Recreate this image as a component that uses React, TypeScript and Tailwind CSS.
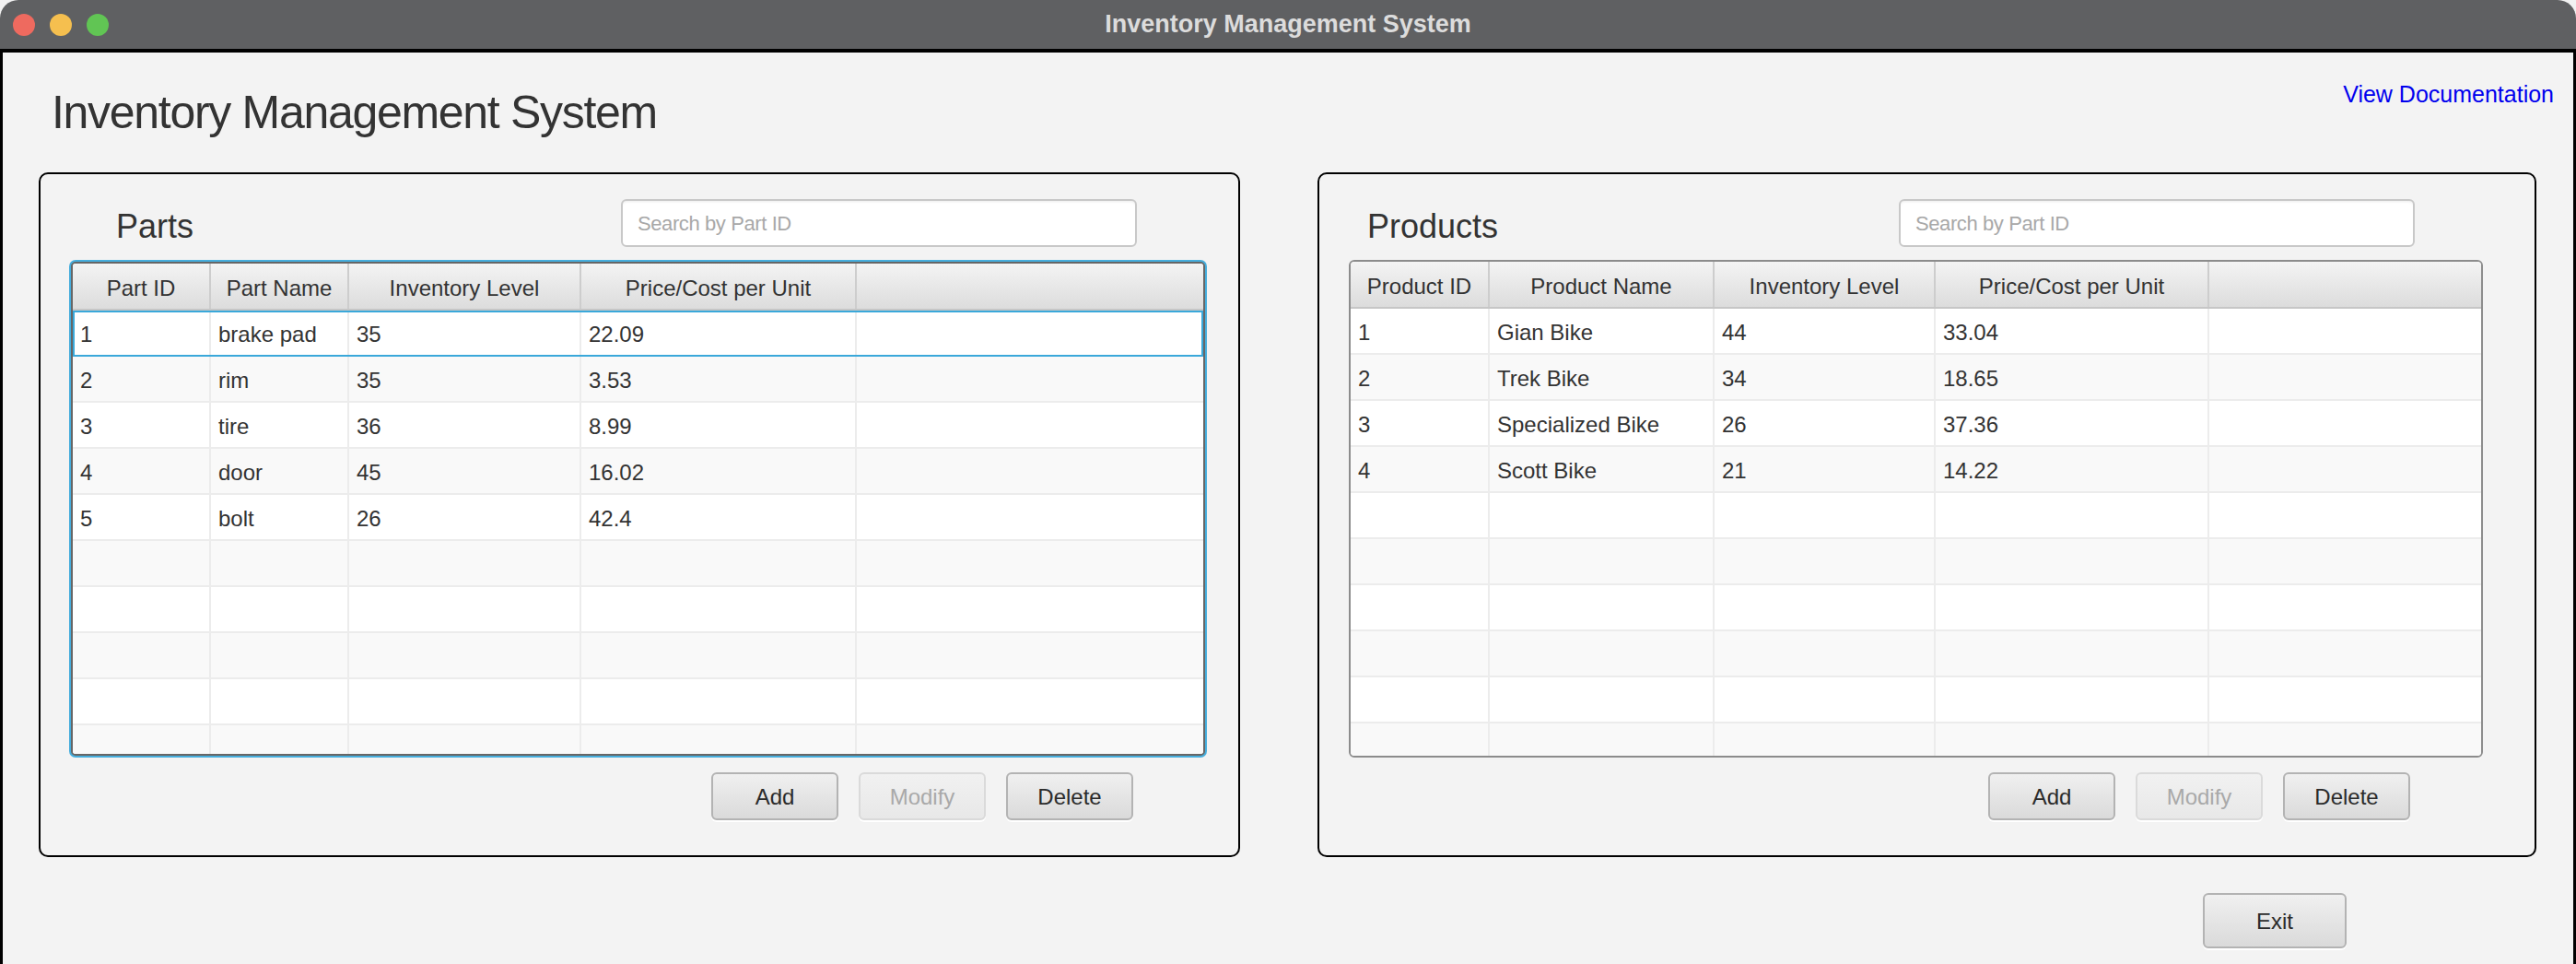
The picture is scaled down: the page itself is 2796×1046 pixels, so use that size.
import React from "react";

type TableProps = {
  headers: string[];
  cols: string[];
  rows: string[][];
  totalRows: number;
  focused?: boolean;
  boxClass: string;
};

function DataTable({ headers, cols, rows, totalRows, focused, boxClass }: TableProps) {
  const all: (string[] | null)[] = [];
  for (let i = 0; i < totalRows; i++) all.push(i < rows.length ? rows[i] : null);
  return (
    <div className={boxClass}>
      <div className="flex h-[51px] shrink-0 bg-gradient-to-b from-[#f4f4f4] to-[#dcdcdc] border-b-2 border-[#c6c6c6]">
        {headers.map((h, i) => (
          <div
            key={i}
            className={`${cols[i]} h-full flex items-center justify-center pt-[4px] border-r-2 border-[#cdcdcd] text-[24px] text-[#333333] shrink-0`}
          >
            {h}
          </div>
        ))}
        <div className="flex-1 h-full" />
      </div>
      <div className="flex-1 overflow-hidden flex flex-col">
        {all.map((r, ri) => (
          <div
            key={ri}
            className={`flex h-[50px] shrink-0 border-b-2 border-[#ececec] ${
              ri % 2 === 0 ? "bg-white" : "bg-[#f9f9f9]"
            } ${focused && ri === 0 ? "outline-2 -outline-offset-2 outline-[#3aa8da]" : ""}`}
          >
            {cols.map((c, ci) => (
              <div
                key={ci}
                className={`${c} h-full flex items-center pl-[8px] pt-[3px] border-r-2 border-[#ececec] text-[24px] text-[#333333] shrink-0 whitespace-nowrap`}
              >
                {r ? r[ci] : ""}
              </div>
            ))}
            <div className="flex-1 h-full" />
          </div>
        ))}
      </div>
    </div>
  );
}

function Btn({ label, disabled, wide }: { label: string; disabled?: boolean; wide?: boolean }) {
  return (
    <div
      className={`${wide ? "w-[156px] h-[60px]" : "w-[138px] h-[52px]"} rounded-[6px] border-2 flex items-center justify-center pt-[2px] text-[24px] shadow-[0_2px_0_#ffffff] ${
        disabled
          ? "border-[#dadada] bg-gradient-to-b from-[#f1f1f1] to-[#e8e8e8] text-[#a9a9a9]"
          : "border-[#b3b3b3] bg-gradient-to-b from-[#f0f0f0] to-[#dadada] text-[#2b2b2b]"
      }`}
    >
      {label}
    </div>
  );
}

function Search() {
  return (
    <div className="w-[560px] h-[52px] bg-white border-2 border-[#c8c8c8] rounded-[6px] flex items-center pl-[16px] shadow-[inset_0_3px_3px_-2px_rgba(0,0,0,0.08)]">
      <span className="text-[22px] tracking-[-0.4px] text-[#a8a8a8]">Search by Part ID</span>
    </div>
  );
}

export default function App() {
  const parts = [
    ["1", "brake pad", "35", "22.09"],
    ["2", "rim", "35", "3.53"],
    ["3", "tire", "36", "8.99"],
    ["4", "door", "45", "16.02"],
    ["5", "bolt", "26", "42.4"],
  ];
  const products = [
    ["1", "Gian Bike", "44", "33.04"],
    ["2", "Trek Bike", "34", "18.65"],
    ["3", "Specialized Bike", "26", "37.36"],
    ["4", "Scott Bike", "21", "14.22"],
  ];
  return (
    <div className="w-[2796px] h-[1046px] bg-[#f2f2f2] font-['Liberation_Sans',Arial,sans-serif] text-[#333333] overflow-hidden">
      <div className="w-full h-full flex flex-col rounded-t-[20px] overflow-hidden">
        <div className="h-[53px] shrink-0 bg-[#5f6062] grid grid-cols-[1fr_auto_1fr] items-center">
          <div className="flex gap-[16px] pl-[14px]">
            <span className="w-[24px] h-[24px] rounded-full bg-[#ee6a5f]" />
            <span className="w-[24px] h-[24px] rounded-full bg-[#f5bf4f]" />
            <span className="w-[24px] h-[24px] rounded-full bg-[#61c554]" />
          </div>
          <div className="text-[27px] font-bold text-[#dcdcdc]">Inventory Management System</div>
          <div />
        </div>
        <div className="flex-1 flex flex-col bg-[#f3f3f3] border-t-4 border-l-[3px] border-r-[3px] border-black">
          <div className="flex justify-between items-start h-[130px] shrink-0">
            <div className="mt-[40px] ml-[53px] text-[50px] leading-[50px] tracking-[-1.3px] text-[#333333]">
              Inventory Management System
            </div>
            <div className="mt-[33px] mr-[21px] text-[25px] leading-[25px] text-[#0000ee]">View Documentation</div>
          </div>
          <div className="flex gap-[84px] pl-[39px] shrink-0">
            <div className="w-[1304px] h-[743px] border-2 border-black rounded-[10px] flex flex-col pl-[33px]">
              <div className="flex items-start h-[95px] w-[1231px] shrink-0">
                <div className="ml-[49px] mt-[39px] text-[36px] leading-[36px] text-[#333333]">Parts</div>
                <div className="ml-auto mr-[74px] mt-[27px]">
                  <Search />
                </div>
              </div>
              <DataTable
                headers={["Part ID", "Part Name", "Inventory Level", "Price/Cost per Unit"]}
                cols={["w-[150px]", "w-[150px]", "w-[252px]", "w-[299px]"]}
                rows={parts}
                totalRows={10}
                focused
                boxClass="w-[1231px] h-[536px] border-2 border-[#666666] rounded-[5px] ring-2 ring-[#46aedd] bg-white flex flex-col overflow-hidden"
              />
              <div className="flex justify-end gap-[22px] w-[1231px] pr-[78px] mt-[18px]">
                <Btn label="Add" />
                <Btn label="Modify" disabled />
                <Btn label="Delete" />
              </div>
            </div>
            <div className="w-[1323px] h-[743px] border-2 border-black rounded-[10px] flex flex-col pl-[32px]">
              <div className="flex items-start h-[93px] w-[1231px] shrink-0">
                <div className="ml-[20px] mt-[39px] text-[36px] leading-[36px] text-[#333333]">Products</div>
                <div className="ml-auto mr-[74px] mt-[27px]">
                  <Search />
                </div>
              </div>
              <DataTable
                headers={["Product ID", "Product Name", "Inventory Level", "Price/Cost per Unit"]}
                cols={["w-[151px]", "w-[244px]", "w-[240px]", "w-[297px]"]}
                rows={products}
                totalRows={10}
                boxClass="w-[1231px] h-[540px] border-2 border-[#8c8c8c] rounded-[6px] bg-white flex flex-col overflow-hidden"
              />
              <div className="flex justify-end gap-[22px] w-[1231px] pr-[79px] mt-[16px]">
                <Btn label="Add" />
                <Btn label="Modify" disabled />
                <Btn label="Delete" />
              </div>
            </div>
          </div>
          <div className="flex justify-end pr-[246px] mt-[39px]">
            <Btn label="Exit" wide />
          </div>
        </div>
      </div>
    </div>
  );
}
